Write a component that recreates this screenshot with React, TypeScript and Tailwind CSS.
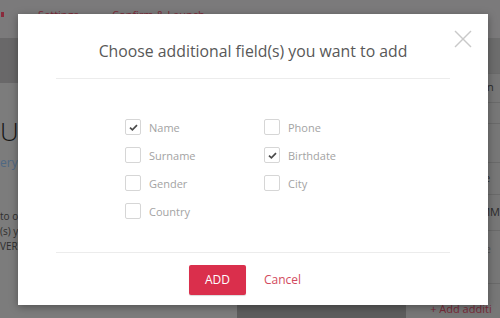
import React from "react";

const font = { fontFamily: '"Open Sans", "Liberation Sans", sans-serif' };

function Check({ checked, label }: { checked?: boolean; label: string }) {
  return (
    <div className="flex h-[28px] items-center">
      <div className="flex h-[16px] w-[16px] items-center justify-center rounded-[2px] border border-[#d6d6d6] bg-white">
        {checked && (
          <svg width="9" height="7" viewBox="0 0 9 7">
            <polyline points="1,3.6 3.4,5.8 8,1.2" fill="none" stroke="#4a4a4a" strokeWidth="1.7" />
          </svg>
        )}
      </div>
      <span className="ml-[8px] text-[11px] leading-none text-[#a3a3a3]">{label}</span>
    </div>
  );
}

export default function App() {
  return (
    <div className="relative h-[318px] w-[500px] overflow-hidden bg-[#7c7c7c]" style={font}>
      {/* background page (dimmed) */}
      <div className="flex h-[38px] items-start bg-[#7b7a7b] pt-[8px] text-[11px] leading-[14px]">
        <span className="ml-[1px] h-[5px] w-[3px] translate-y-[4px] bg-[#8a2a3c]" />
        <span className="ml-[34px] text-[#7e2c3a]">Settings</span>
        <span className="ml-[16px] text-[#6a5a5e]">›</span>
        <span className="ml-[14px] text-[#7e2c3a]">Confirm &amp; Launch</span>
      </div>
      <div className="flex h-[280px]">
        <div className="flex w-[410px] flex-col">
          <div className="h-[45px] bg-[#696869]" />
          <div className="flex flex-1">
            <div className="w-[237px] bg-[#7c7c7c] pt-[28px]">
              <div className="text-[26px] font-light leading-[40px] tracking-[-1.5px] text-[#151515]">UP</div>
              <div className="mt-[4px] text-[12px] leading-[16px] text-[#4f6883]">ery</div>
              <div className="mt-[38px] text-[10px] leading-[15px] text-[#2e2e2e]">
                <div>to ou</div>
                <div>(s) y</div>
                <div>VERY</div>
              </div>
            </div>
            <div className="flex-1 bg-[#5d5d5d]" />
          </div>
        </div>
        <div className="flex flex-1 flex-col bg-[#777777] text-[11px] text-[#2a2a2a]">
          <div className="h-[36px] border-b border-[#6a6a6a] bg-[#6d6d6d]" />
          <div className="flex h-[29px] items-center border-b border-[#6a6a6a] pl-[74px]">un</div>
          <div className="h-[22px] border-b border-[#6a6a6a]" />
          <div className="h-[39px] border-b border-[#6a6a6a]" />
          <div className="flex h-[32px] items-center border-b border-[#6a6a6a] pl-[74px]">te</div>
          <div className="flex h-[36px] items-center border-b border-[#6a6a6a] pl-[74px]">MM</div>
          <div className="h-[54px] border-b border-[#6a6a6a] pl-[74px] pt-[10px] text-[#555]">re</div>
          <div className="pl-[24px] pt-[17px] text-[#7a2a38]">+ Add additi</div>
        </div>
      </div>

      {/* modal */}
      <div className="absolute left-[18px] top-[14px] flex h-[291px] w-[470px] flex-col bg-white px-[38px] shadow-[0_2px_8px_rgba(0,0,0,0.35)]">
        <button className="absolute right-[16px] top-[16px] h-[18px] w-[18px]">
          <svg width="18" height="18" viewBox="0 0 18 18">
            <line x1="1" y1="1" x2="17" y2="17" stroke="#c9c9c9" strokeWidth="1.4" />
            <line x1="17" y1="1" x2="1" y2="17" stroke="#c9c9c9" strokeWidth="1.4" />
          </svg>
        </button>
        <div className="h-[65px] border-b border-[#ececec] pt-[25px] text-center text-[15.8px] leading-[24px] text-[#585858]">
          Choose additional field(s) you want to add
        </div>
        <div className="border-b border-[#ececec] pb-[27px] pl-[69px] pt-[34px]">
          <div className="grid grid-cols-[139px_139px]">
            <Check checked label="Name" />
            <Check label="Phone" />
            <Check label="Surname" />
            <Check checked label="Birthdate" />
            <Check label="Gender" />
            <Check label="City" />
            <Check label="Country" />
          </div>
        </div>
        <div className="flex justify-center pl-[2px] pt-[12px]">
          <button className="h-[30px] w-[57px] rounded-[2px] bg-[#da2f4c] text-[12px] text-white shadow-[0_1px_1px_rgba(0,0,0,0.15)]">
            ADD
          </button>
          <button className="h-[30px] px-[18px] text-[12px] text-[#d24a5e]">Cancel</button>
        </div>
      </div>
    </div>
  );
}
